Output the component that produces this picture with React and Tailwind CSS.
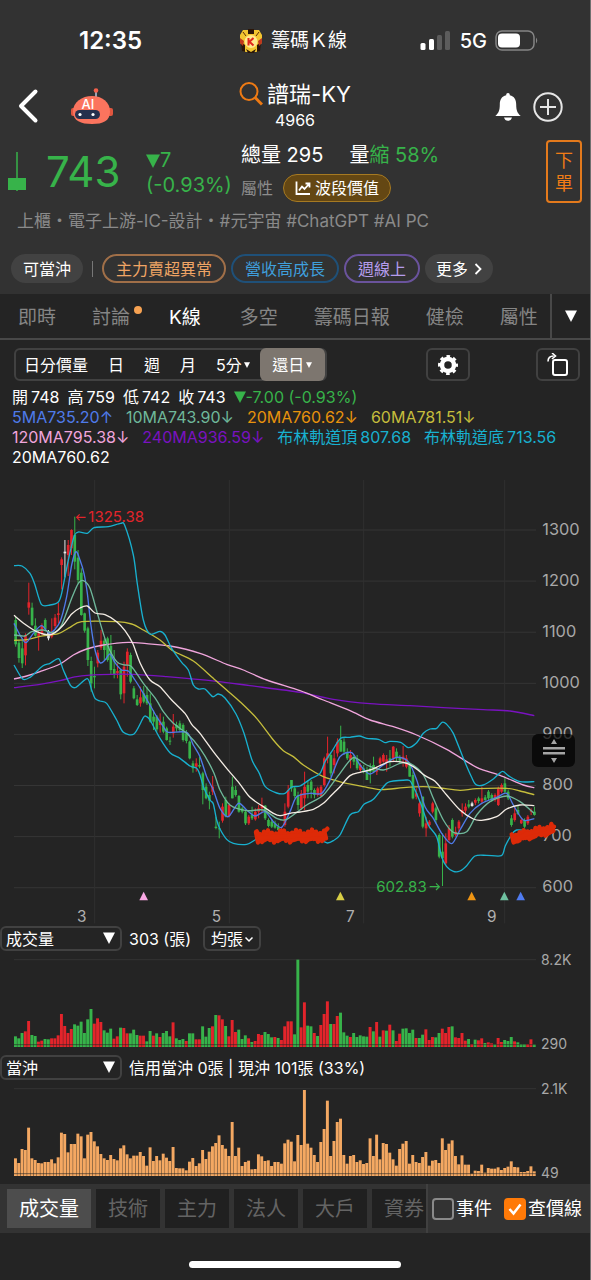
import React, { useState } from 'react';

const GREEN = '#37b34a';
const RED = '#e3242b';
const WHITE = '#e8e8e8';
const COLORS = { g: GREEN, r: RED, w: WHITE };

const STEP = 9.85;
const LEFT = 42;

// bodyTop, bodyBottom, high, low, colour
const candles = `
450,523,440,530,g 518,564,510,578,g 535,580,505,594,g 495,556,490,586,r 397,413,338,434,r 413,465,398,468,g
467,497,445,500,g 490,500,480,542,r 468,490,460,495,r 450,477,445,485,g 485,505,480,511,w 490,500,445,505,r
443,468,432,475,r 430,435,398,460,r 268,285,262,358,r 245,250,210,322,w 225,255,210,318,r 180,235,178,255,r
195,275,140,298,g 263,330,240,340,g 308,435,295,437,g 430,482,428,488,g 475,570,470,588,g 573,640,560,665,g
618,622,590,655,g 548,580,540,592,r 512,533,480,540,r 512,540,505,570,g 505,570,500,575,g 528,600,495,612,g
597,612,540,625,g 603,610,580,625,r 600,673,596,688,g 590,670,575,700,r 545,585,535,620,r 555,635,548,640,g
655,685,648,688,g 688,705,675,708,g 682,700,650,710,r 670,695,648,700,g 675,700,650,705,g 700,755,670,758,g
740,755,720,780,g 740,778,735,785,g 755,765,730,788,r 755,785,740,790,g 775,810,770,812,g 812,815,800,825,g
770,790,732,803,r 765,775,755,785,g 760,780,752,785,g 765,810,760,815,g 790,813,780,820,g 815,865,812,868,g
880,895,872,908,g 880,890,865,905,r 885,890,860,895,g 910,960,905,1003,g 950,985,940,988,g 975,992,965,1018,g
950,965,918,975,r 1070,1074,1040,1078,g 1075,1078,1055,1105,g 1010,1052,1000,1058,r 990,1040,980,1042,g 1005,1038,1000,1042,r
950,985,920,985,g 960,975,948,980,g 978,1025,975,1028,g 1015,1025,1010,1030,g 1025,1060,1020,1065,g 1040,1060,1035,1065,r
1035,1045,1010,1050,g 1025,1048,1015,1052,r 1015,1025,1005,1045,r 1005,1015,983,1030,r 1007,1045,1005,1050,g 1050,1068,1045,1072,g
1055,1070,1048,1074,g 1060,1073,1052,1076,g 1070,1080,1060,1082,g 1078,1090,1070,1095,r 1025,1065,1000,1070,r 960,1010,945,1015,r
930,955,930,965,g 955,978,950,985,g 975,1005,965,1020,g 970,1015,960,1020,r 950,985,905,1020,r 945,965,930,985,g
935,960,930,985,g 960,975,955,985,g 955,975,950,980,r 950,978,945,980,r 865,945,860,950,r 850,865,800,880,r
855,910,850,920,g 865,885,840,910,r 815,850,805,860,r 810,845,767,845,g 815,845,805,855,g 848,865,835,870,g
855,870,840,895,r 860,875,855,885,g 870,895,855,900,g 885,900,880,905,r 895,905,885,910,g 900,930,890,930,g
895,905,880,940,g 885,905,860,908,g 895,905,890,915,r 865,880,860,885,r 855,875,850,878,r 868,878,855,905,r
865,875,840,890,g 830,865,828,875,r 845,865,835,875,g 862,872,855,880,g 860,868,828,890,r 865,890,855,895,r
885,920,880,920,g 915,985,905,988,g 970,980,955,988,r 1000,1030,990,1040,r 980,1070,980,1075,g
1060,1075,1040,1100,r 1055,1065,1050,1075,r 1000,1025,995,1030,r 1015,1050,1010,1060,g 1095,1160,1090,1165,g 1145,1165,1090,1248,g
1120,1180,1090,1185,r 1075,1110,1065,1115,r 1050,1100,1045,1105,g 1085,1095,1070,1100,r 1055,1075,1050,1090,r 1020,1030,1000,1040,r
1010,1022,1000,1030,r 1003,1010,990,1015,g 1000,1008,995,1010,w 990,998,985,1005,r 985,993,980,1000,g 985,995,950,1000,r
982,990,975,995,g 965,985,960,990,g 975,990,970,995,g 975,988,970,995,r 955,1005,950,1008,r 945,965,940,970,r
940,965,920,970,g 965,985,960,990,g 1045,1065,1035,1070,g 1030,1050,1010,1055,r 1020,1032,1005,1035,g 1050,1060,1045,1062,r
1050,1070,1045,1075,g 1040,1060,1035,1065,r 1022,1025,1015,1035,r 1025,1035,1010,1037,g
`.trim().split(/\s+/).map((row) => {
  const [top, bottom, high, low, color] = row.split(',');
  return { top: +top, bottom: +bottom, high: +high, low: +low, color };
});

const lines = [
  { color: '#7a12c0', pts: '42,653 120,643 180,632 230,620 300,614 400,613 500,620 650,634 750,647 900,667 1000,688 1110,701 1230,707 1330,713 1450,719 1530,723 1603,737' },
  { color: '#f0a5dc', pts: '42,627 80,618 120,605 180,582 220,555 260,537 310,525 385,517 440,521 510,528 600,550 680,583 730,600 800,630 900,662 970,690 1050,722 1110,750 1180,770 1250,795 1340,838 1430,892 1500,916 1570,945 1603,953' },
  { color: '#c5bd3c', pts: '42,511 80,509 120,499 175,491 210,472 245,455 350,455 395,462 430,480 480,510 520,543 580,573 640,625 680,660 720,695 770,745 820,810 850,842 880,860 910,885 970,920 1030,938 1090,950 1145,959 1210,953 1270,950 1320,954 1380,961 1430,956 1520,955 1560,963 1603,974' },
  { color: '#18b0cf', pts: '42,287 66,288 90,310 104,342 124,403 150,405 175,396 185,370 205,270 222,200 235,186 262,190 282,173 325,170 362,160 374,166 400,255 412,342 430,450 450,492 480,484 495,495 515,535 545,577 565,600 580,645 595,657 615,657 638,680 655,672 675,684 708,732 732,790 756,870 778,910 796,950 830,969 855,970 875,951 900,948 930,928 960,910 975,875 995,845 1022,805 1050,802 1078,798 1100,805 1135,808 1155,818 1170,814 1202,817 1225,833 1250,818 1270,790 1290,777 1310,775 1326,757 1340,763 1360,790 1390,865 1415,922 1428,944 1450,945 1480,927 1507,904 1525,917 1560,935 1603,935' },
  { color: '#18b0cf', pts: '42,585 68,627 90,622 128,588 150,580 176,566 190,600 212,647 228,652 262,626 275,660 285,685 300,693 320,700 350,750 370,787 402,792 430,743 438,739 450,750 480,805 510,848 540,865 570,888 590,895 600,915 612,955 630,990 640,1002 650,1050 660,1077 680,1108 700,1120 740,1123 765,1110 790,1090 850,1096 900,1100 960,1110 982,1119 1000,1112 1020,1095 1050,1035 1075,1025 1092,1003 1120,988 1155,945 1170,935 1222,930 1235,940 1262,1000 1285,1065 1310,1100 1325,1160 1340,1190 1360,1204 1380,1203 1400,1187 1425,1158 1460,1156 1504,1157 1515,1130 1528,1105 1550,1080 1603,1085' },
  { color: '#4f7bea', pts: '42,460 60,495 78,518 100,490 125,467 150,490 180,455 200,380 215,285 228,245 240,270 252,310 262,370 272,460 285,540 300,578 315,570 330,552 345,578 365,600 385,603 405,630 425,662 450,705 470,740 490,770 505,787 560,787 580,825 600,860 620,920 640,960 660,1015 685,1040 715,1000 740,1020 765,1038 795,1025 820,1055 845,1072 870,1025 890,980 930,970 965,970 990,930 1020,860 1055,848 1080,885 1110,912 1150,885 1190,862 1225,875 1250,930 1275,1010 1300,1045 1325,1090 1355,1121 1380,1080 1410,1030 1445,1000 1490,982 1520,970 1540,1005 1570,1050 1603,1046' },
  { color: '#6fb89b', pts: '42,495 75,498 95,485 130,480 160,488 185,465 215,385 235,340 250,332 270,355 295,440 320,520 350,575 375,585 395,590 430,640 468,688 490,725 520,760 560,790 600,835 640,905 660,960 690,1005 740,1022 790,1020 830,1045 860,1048 920,1005 970,975 1020,910 1060,863 1100,885 1150,900 1200,880 1230,880 1270,915 1300,985 1330,1050 1360,1087 1400,1085 1430,1035 1470,995 1520,978 1560,995 1603,1030' },
  { color: '#f3ece4', pts: '42,436 75,463 110,485 145,495 165,488 190,465 215,432 240,414 262,408 285,429 315,434 350,455 375,482 398,520 420,578 450,630 480,650 515,690 555,730 575,763 600,790 640,845 680,895 718,940 750,982 790,1010 820,1030 840,1037 870,1030 900,1026 940,1018 970,1000 995,975 1020,950 1050,917 1080,907 1110,900 1140,887 1170,875 1210,877 1240,890 1275,917 1305,934 1340,975 1380,1020 1420,1047 1445,1051 1490,1040 1520,1017 1560,1005 1603,1007' },
];

const volumeHeights = [
  32, 26, 42, 47, 78, 36, 33, 16, 19, 24, 23, 26, 26, 35, 99, 63, 42, 54, 68, 64, 76, 42, 83, 114, 70, 86, 75, 50, 43, 55,
  25, 32, 58, 57, 41, 41, 52, 36, 34, 34, 17, 48, 34, 41, 30, 42, 48, 32, 74, 26, 21, 24, 18, 41, 41, 23, 23, 62, 31, 57,
  62, 96, 95, 83, 63, 32, 81, 45, 52, 24, 35, 26, 15, 18, 39, 36, 45, 39, 29, 30, 27, 21, 62, 77, 77, 38, 262, 59, 134, 64,
  62, 42, 33, 66, 99, 137, 69, 69, 93, 103, 44, 34, 30, 42, 30, 35, 32, 31, 60, 47, 75, 31, 50, 49, 67, 50, 18, 40, 55, 56,
  42, 52, 27, 27, 37, 53, 21, 30, 29, 42, 55, 42, 60, 62, 29, 27, 42, 19, 24, 9, 22, 20, 26, 12, 14, 11, 8, 27, 15, 21,
  18, 30, 17, 14, 9, 9, 9, 23, 8,
];
const volumeColors =
  'gggrrggrrg' + 'grrrrrrrgg' + 'ggggrrrggg' + 'rrgrrgggrr' + 'ggrgrgggrg' +
  'ggrggrrggg' + 'rgrrgrrrgg' + 'grgrrrgggr' + 'grrrrggrrg' + 'grgrrrgrrg' +
  'ggrgggggrg' + 'rgrgrgrrgg' + 'ggrggrrrgg' + 'rrrgrrrrgr' + 'grrgrrgrrg' + 'ggrgggrrg';

const dayTradeHeights = [
  53, 39, 81, 78, 145, 53, 48, 39, 38, 42, 42, 50, 38, 56, 130, 126, 71, 96, 96, 127, 119, 53, 124, 132, 104, 89, 66, 53, 48, 63,
  51, 47, 83, 92, 65, 53, 61, 61, 72, 60, 31, 86, 45, 60, 47, 67, 55, 45, 87, 24, 23, 23, 17, 43, 54, 30, 38, 78, 51, 73,
  89, 99, 122, 93, 82, 60, 162, 60, 85, 30, 42, 46, 20, 21, 65, 59, 45, 47, 30, 42, 42, 37, 98, 109, 103, 44, 123, 93, 258, 97,
  85, 63, 42, 102, 141, 226, 60, 105, 162, 172, 63, 37, 60, 63, 42, 47, 36, 39, 113, 60, 124, 50, 99, 96, 70, 50, 31, 81, 97, 105,
  37, 63, 42, 39, 57, 72, 31, 46, 48, 39, 113, 78, 97, 107, 60, 35, 62, 34, 34, 7, 16, 15, 34, 10, 24, 22, 22, 26, 18, 24,
  28, 44, 27, 26, 12, 12, 15, 29, 14,
];

const smoothPath = (str) => {
  const p = str.split(' ').map((s) => s.split(',').map(Number));
  let d = `M${p[0][0]} ${p[0][1]}`;
  for (let i = 0; i < p.length - 1; i++) {
    const a = p[i - 1] || p[i];
    const b = p[i];
    const c = p[i + 1];
    const e = p[i + 2] || c;
    d += `C${b[0] + (c[0] - a[0]) / 7} ${b[1] + (c[1] - a[1]) / 7} ${c[0] - (e[0] - b[0]) / 7} ${c[1] - (e[1] - b[1]) / 7} ${c[0]} ${c[1]}`;
  }
  return d;
};

// red marker strokes over the two support zones
const scribble = (x0, y0, x1, y1, h) => {
  const n = Math.round((x1 - x0) / 6);
  let d = '';
  for (let i = 0; i <= n; i++) {
    const x = x0 + ((x1 - x0) * i) / n;
    const mid = y0 + ((y1 - y0) * i) / n;
    const amp = h * (0.7 + 0.3 * Math.sin(i * 2.3));
    d += `${i ? 'L' : 'M'}${x.toFixed(1)} ${(mid + (i % 2 ? amp : -amp)).toFixed(1)}`;
  }
  return d;
};

const Triangle = ({ className }) => (
  <svg className={className} viewBox="0 0 12 12" aria-hidden="true"><path d="M0 0.500H12L6 12Z" fill="currentColor" /></svg>
);

const StatusBar = () => (
  <div className="flex h-20 items-center pl-[79px] pr-[51px] pt-0.5">
    <span className="w-[160px] text-2xl font-semibold">12:35</span>
    <div className="flex flex-1 items-center gap-2">
      <svg className="h-6 w-6" viewBox="0 0 24 24">
        <path d="M4 1h5v4h6V1h5l3 5v8l-3 2v6l-3 1H7l-3-1v-6l-3-2V6z" fill="#f2c530" />
        <path d="M9 0h6v5H9zM2 13l4 3v7l-3-1zM22 13l-4 3v7l3-1zM7 20l5 3 5-3-2 4H9z" fill="#2b1608" />
        <path d="M1 9l4 3-1 5-3-3zM23 9l-4 3 1 5 3-3z" fill="#c0391d" />
        <path d="M4 3l3 4M20 3l-3 4" stroke="#5d2c0b" strokeWidth="1" />
        <circle cx="12" cy="12.500" r="6.500" fill="#ffe98c" />
        <path d="M9.500 9v7.500M14.500 9l-4 3.800 4 3.700" stroke="#e0261c" strokeWidth="2" fill="none" />
      </svg>
      <span className="text-[19px]">籌碼Ｋ線</span>
    </div>
    <div className="flex items-center gap-2">
      <svg className="h-6 w-8" viewBox="0 0 32 24">
        <rect x="0.500" y="14" width="5" height="7" rx="1.500" fill="#fff" />
        <rect x="9" y="10" width="5" height="11" rx="1.500" fill="#fff" />
        <rect x="17" y="6" width="5" height="15" rx="1.500" fill="#5c5c5c" />
        <rect x="25" y="2" width="5" height="19" rx="1.500" fill="#5c5c5c" />
      </svg>
      <span className="text-xl font-medium">5G</span>
      <svg className="h-6 w-11" viewBox="0 0 44 24">
        <rect x="1" y="2" width="38" height="19" rx="6" fill="none" stroke="#858585" strokeWidth="1.500" />
        <rect x="3" y="4.500" width="22" height="14" rx="4" fill="#fff" />
        <path d="M41 8.500q2.500 3 0 6z" fill="#858585" />
      </svg>
    </div>
  </div>
);

const NavBar = () => (
  <div className="grid h-[50px] grid-cols-[1fr_auto_1fr] items-center pl-[17px] pr-[17px]">
    <div className="flex items-center gap-8 pb-1">
      <button type="button" aria-label="返回">
        <svg className="h-9 w-[22px]" viewBox="0 0 22 36"><path d="M18.500 3.500L4 18l14.500 14.500" fill="none" stroke="#fff" strokeWidth="4" strokeLinecap="round" strokeLinejoin="round" /></svg>
      </button>
      <button type="button" aria-label="AI 助理">
        <svg className="h-9 w-[42px]" viewBox="0 0 42 36">
          <path d="M25 3v7" stroke="#9aa3b5" strokeWidth="2" />
          <circle cx="25" cy="2.500" r="2.300" fill="#f4604b" />
          <rect x="0" y="20" width="42" height="8" rx="2" fill="#e0563f" />
          <path d="M21 8c10 0 18 6 18 15.500S32 36 21 36 2 33 2 23.500 11 8 21 8z" fill="#fb745e" />
          <rect x="4" y="22" width="25" height="9" rx="4.500" fill="#26304d" />
          <circle cx="9" cy="26.500" r="1.600" fill="#fff" />
          <circle cx="22" cy="26.500" r="1.600" fill="#fff" />
          <text x="17" y="21" textAnchor="middle" fontSize="13" fontWeight="500" fill="#fff">AI</text>
        </svg>
      </button>
    </div>
    <div className="flex flex-col items-center pb-1">
      <button type="button" className="flex items-center gap-1">
        <svg className="h-6 w-6" viewBox="0 0 24 24"><circle cx="10" cy="9.500" r="8.500" fill="none" stroke="#ee7a14" strokeWidth="2" /><path d="M16 15.500l7 7" stroke="#ee7a14" strokeWidth="3" /></svg>
        <h1 className="text-[22px] leading-7">譜瑞-KY</h1>
      </button>
      <span className="text-base leading-6">4966</span>
    </div>
    <div className="flex items-center justify-end gap-3 pb-0.5 pr-2.5">
      <button type="button" aria-label="通知">
        <svg className="h-7 w-[26px]" viewBox="0 0 26 28"><path d="M13 0c1.200 0 1.800.8 1.800 2.200 4.500 1 6.400 4.400 6.400 9.300 0 6 1.300 8.500 4.500 11.500H.3c3.200-3 4.500-5.500 4.500-11.500 0-4.900 1.900-8.300 6.400-9.300C11.200.8 11.800 0 13 0zM9 24.500h8c-.5 2-2 3.300-4 3.300s-3.500-1.300-4-3.300z" fill="#fff" /></svg>
      </button>
      <button type="button" aria-label="加入自選">
        <svg className="h-[30px] w-[30px]" viewBox="0 0 30 30"><circle cx="15" cy="15" r="13.700" fill="none" stroke="#e6e6e6" strokeWidth="2" /><path d="M15 7v16M7 15h16" stroke="#e6e6e6" strokeWidth="2" /></svg>
      </button>
    </div>
  </div>
);

const Quote = () => (
  <section className="flex items-start px-2 pt-2.5">
    <svg className="mt-3 h-10 w-[18px] shrink-0" viewBox="0 0 18 40"><path d="M9 0v39" stroke={GREEN} strokeWidth="1.500" /><rect x="0" y="26" width="18" height="12" fill={GREEN} /></svg>
    <strong className="ml-5 mt-2 w-[100px] text-[42px] font-normal leading-[48px] text-[#37b34a]">743</strong>
    <div className="mt-2 w-[95px] text-xl leading-[25px] text-[#37b34a]">
      <div className="flex items-center"><Triangle className="h-3.5 w-3.5" />7</div>
      <div>(-0.93%)</div>
    </div>
    <div className="flex-1">
      <div className="flex gap-[26px] text-xl leading-[30px]">
        <span>總量 295</span>
        <span>量<span className="text-[#37b34a]">縮 58%</span></span>
      </div>
      <div className="mt-1 flex items-center gap-2.5">
        <span className="text-base text-[#8c8c8c]">屬性</span>
        <button type="button" className="flex h-7 items-center gap-1 rounded-full border border-[#a67a22] bg-[#644713] px-[11px] text-base">
          <svg className="h-4 w-4" viewBox="0 0 16 16" fill="none" stroke="#fff" strokeWidth="1.800"><path d="M1.500 1.500v12.500H15M4 10.500l3-4 2.500 2.500L14 4M10.500 3.500h4v4" /></svg>
          波段價值
        </button>
      </div>
    </div>
    <button type="button" className="h-[63px] w-9 rounded border-2 border-[#e47a1c] text-lg leading-[23px] text-[#f07c16]">下<br />單</button>
  </section>
);

const chips = [
  { label: '主力賣超異常', style: 'border-[#a06f48] text-[#f0a565]' },
  { label: '營收高成長', style: 'border-[#1f5078] text-[#3f9fdc]' },
  { label: '週線上', style: 'border-[#6a539c] text-[#b59cec]' },
];

const Chips = () => (
  <div className="mt-[21px] flex items-center gap-[5px] whitespace-nowrap pb-[11px] pl-[11px] text-base">
    <button type="button" className="h-[29px] rounded-full bg-[#424242] px-3">可當沖</button>
    <span className="mx-1 h-4 w-px bg-[#777]" />
    {chips.map((chip) => (
      <button type="button" key={chip.label} className={`h-[29px] rounded-full border-2 px-2.5 leading-6 ${chip.style}`}><span className="px-0.5">{chip.label}</span></button>
    ))}
    <button type="button" className="flex h-[29px] items-center gap-1.5 rounded-full bg-[#424242] px-[11px]">
      更多
      <svg className="h-3 w-2" viewBox="0 0 8 12"><path d="M1.500 1l5 5-5 5" fill="none" stroke="#fff" strokeWidth="1.800" /></svg>
    </button>
  </div>
);

const tabs = ['即時', '討論', 'K線', '多空', '籌碼日報', '健檢', '屬性'];

const Tabs = () => {
  const [active, setActive] = useState('K線');
  return (
    <nav className="flex h-[46px] border-b-2 border-b-[#484848]">
      <div className="flex min-w-0 flex-1 items-center gap-9 overflow-hidden whitespace-nowrap pl-[18px] pt-1 text-[19px]">
        {tabs.map((tab) => (
          <button type="button" key={tab} onClick={() => setActive(tab)} className={`relative shrink-0 ${tab === active ? 'px-[3px] text-white' : 'text-[#858585]'}`}>
            {tab}
            {tab === '討論' && <span className="absolute -right-3 top-0.5 h-2 w-2 rounded-full bg-[#f6a252]" />}
          </button>
        ))}
      </div>
      <button type="button" aria-label="更多頁籤" className="flex w-10 items-center justify-center border-l-2 border-[#484848]">
        <Triangle className="h-3 w-3" />
      </button>
    </nav>
  );
};

const Toolbar = () => (
  <div className="flex items-center pl-3.5 pr-2.5 pt-2 text-base">
    <div className="flex h-[33px] items-center whitespace-nowrap rounded-md border-2 border-[#414141]">
      <button type="button" className="pl-2">日分價量</button>
      <button type="button" className="pl-5">日</button>
      <button type="button" className="pl-5">週</button>
      <button type="button" className="pl-5">月</button>
      <button type="button" className="flex items-center gap-0.5 pl-5 pr-2.5">5分<Triangle className="h-1.5 w-1.5" /></button>
      <button type="button" className="flex h-[33px] w-[65px] items-center justify-center gap-0.5 rounded-md bg-[#7d766f]">還日<Triangle className="h-1.5 w-1.5" /></button>
    </div>
    <div className="flex flex-1 justify-between pl-[99px]">
      <button type="button" aria-label="設定" className="flex h-[33px] w-11 items-center justify-center rounded-md border-2 border-[#414141]">
        <svg className="h-5 w-5" viewBox="0 0 20 20">
          <circle cx="10" cy="10" r="6" fill="none" stroke="#fff" strokeWidth="4.500" />
          <circle cx="10" cy="10" r="8.700" fill="none" stroke="#fff" strokeWidth="2.600" strokeDasharray="3.600 3.233" strokeDashoffset="1.800" />
        </svg>
      </button>
      <button type="button" aria-label="旋轉螢幕" className="flex h-[33px] w-11 items-center justify-center rounded-md border-2 border-[#414141]">
        <svg className="h-6 w-6" viewBox="0 0 24 24" fill="none" stroke="#fff" strokeWidth="2"><rect x="7" y="7" width="14" height="15" rx="2" /><path d="M2 8.500C2 5 4 3 7.500 3M6 0l3.500 3L6 6" strokeWidth="1.600" /></svg>
      </button>
    </div>
  </div>
);

const Reading = ({ label, value, className }) => (
  <span className={`flex gap-[3px] ${className || ''}`}><span>{label}</span><span>{value}</span></span>
);

const Indicators = () => (
  <div className="whitespace-nowrap pb-[3px] pl-3 pt-1.5 text-base leading-5">
    <div className="flex gap-2">
      <Reading label="開" value="748" />
      <Reading label="高" value="759" />
      <Reading label="低" value="742" />
      <Reading label="收" value="743" />
      <span className="flex items-center text-[#37b34a]"><Triangle className="h-3 w-3" />-7.00 (-0.93%)</span>
    </div>
    <div className="flex gap-[13px]">
      <span className="text-[#4f7bea]">5MA735.20↑</span>
      <span className="text-[#6fb89b]">10MA743.90↓</span>
      <span className="text-[#e8930c]">20MA760.62↓</span>
      <span className="text-[#c5bd3c]">60MA781.51↓</span>
    </div>
    <div className="flex gap-[13px]">
      <span className="text-[#f0a5dc]">120MA795.38↓</span>
      <span className="text-[#7a12c0]">240MA936.59↓</span>
      <Reading label="布林軌道頂" value="807.68" className="text-[#18b0cf]" />
      <Reading label="布林軌道底" value="713.56" className="text-[#18b0cf]" />
    </div>
    <div>20MA760.62</div>
  </div>
);

const prices = [1300, 1200, 1100, 1000, 900, 800, 700, 600];
const months = [{ x: 284, label: '3' }, { x: 688, label: '5' }, { x: 1091, label: '7' }, { x: 1514, label: '9' }];
const markers = [[431, '#f9a8e4'], [1021, '#d8ce45'], [1415, '#ee9413'], [1513, '#6fc0a0'], [1562, '#4f7bf0']];

const PriceChart = () => (
  <div className="relative">
    <svg className="block h-auto w-full" viewBox="0 0 1770 1368" role="img" aria-label="K線圖">
      {prices.map((price, i) => (
        <g key={price}>
          <path d={`M42 ${180 + i * 153.3}H1608`} stroke="#353535" strokeWidth="3" />
          <text x="1627" y={194 + i * 153.3} fontSize="49" fill="#a8a8a8">{price}</text>
        </g>
      ))}
      {months.map((m) => (
        <g key={m.label}>
          <path d={`M${m.x} 30V1360`} stroke="#303030" strokeWidth="3" />
          <text x={m.x - 53} y="1357" fontSize="46" fill="#b0b0b0">{m.label}</text>
        </g>
      ))}
      {candles.map((c, i) => {
        const x = LEFT + STEP * i + 5;
        return (
          <g key={i} fill={COLORS[c.color]}>
            <rect x={x - 1.5} y={c.high} width="3" height={c.low - c.high} />
            <rect x={x - 4} y={c.top} width="8" height={Math.max(c.bottom - c.top, 3)} />
          </g>
        );
      })}
      {lines.map((line, i) => (
        <path key={i} d={smoothPath(line.pts)} fill="none" stroke={line.color} strokeWidth="4" strokeLinejoin="round" />
      ))}
      <path d="M257 142H230M239 133l-9 9 9 9" fill="none" stroke={RED} strokeWidth="3.5" />
      <text x="265" y="157" fontSize="45" fill={RED}>1325.38</text>
      <text x="1280" y="1265" fontSize="45" textAnchor="end" fill={GREEN}>602.83</text>
      <path d="M1289 1250H1318M1308 1240l10 10-10 10" fill="none" stroke={GREEN} strokeWidth="3.5" />
      {markers.map(([x, color]) => (
        <path key={x} d={`M${x - 13} 1291L${x} 1265L${x + 13} 1291Z`} fill={color} />
      ))}
      <g fill="none" stroke="#dd2a08" strokeWidth="13" strokeLinejoin="round" strokeLinecap="round">
        <path d={scribble(768, 1100, 978, 1097, 19)} />
        <path d={scribble(775, 1102, 970, 1101, 10)} />
        <path d="M770 1084L780 1104L966 1092L982 1076" />
        <path d={scribble(1535, 1104, 1660, 1076, 16)} />
        <path d={scribble(1540, 1108, 1655, 1080, 9)} />
        <path d="M1540 1112L1580 1092L1662 1070" />
      </g>
    </svg>
    <button type="button" aria-label="調整圖高" className="absolute right-[15px] top-[264px] flex h-[33px] w-[43px] items-center justify-center rounded-md bg-black/70">
      <svg className="h-6 w-6" viewBox="0 0 24 24" fill="#a5a5a5"><path d="M9 5l3-5 3 5zM9 19l3 5 3-5zM1 8h22v2.500H1zM1 13h22v2.500H1z" /></svg>
    </button>
  </div>
);

const BarChart = ({ label, heights, colorAt, max, min }) => (
  <svg className="block h-auto w-full" viewBox="0 -6 1770 306" role="img" aria-label={label}>
    <path d="M42 20H1608" stroke="#333" strokeWidth="3" />
    {heights.map((h, i) => (
      <rect key={i} x={LEFT + STEP * i} y={282 - h} width="8.8" height={h} fill={colorAt(i)} />
    ))}
    <path d="M42 275H1608" stroke="#242424" strokeOpacity="0.6" strokeWidth="3" />
    <text x="1623" y="36" fontSize="42" fill="#a8a8a8">{max}</text>
    <text x="1623" y="289" fontSize="42" fill="#a8a8a8">{min}</text>
  </svg>
);

const IndicatorSelect = ({ label, options }) => (
  <div className="relative w-[122px]">
    <select aria-label={label} className="block h-[25px] w-full appearance-none rounded-md border-2 border-[#414141] bg-transparent pl-1 text-base leading-5">
      {options.map((o) => <option key={o}>{o}</option>)}
    </select>
    <Triangle className="pointer-events-none absolute right-[7px] top-1.5 h-3 w-3" />
  </div>
);

const bottomTabs = ['成交量', '技術', '主力', '法人', '大戶', '資券'];

const BottomBar = () => {
  const [active, setActive] = useState('成交量');
  const [events, setEvents] = useState(false);
  const [priceLine, setPriceLine] = useState(true);
  return (
    <div className="mt-0.5 flex h-[49px] bg-[#333]">
      <div className="flex min-w-0 flex-1 items-center gap-[5px] overflow-hidden whitespace-nowrap border-r-2 border-[#404040] pl-[7px] text-xl">
        {bottomTabs.map((tab) => (
          <button type="button" key={tab} onClick={() => setActive(tab)} className={`h-[39px] shrink-0 px-3 ${tab === active ? 'bg-[#4d4d4d] text-white' : 'bg-[#202020] text-[#646464]'}`}>{tab}</button>
        ))}
      </div>
      <div className="flex shrink-0 items-center gap-3 pl-1 pr-2 text-lg">
        <label className="flex items-center gap-0.5">
          <input type="checkbox" checked={events} onChange={(e) => setEvents(e.target.checked)} className="h-[22px] w-[22px] appearance-none rounded-sm border-2 border-[#8a8a8a] checked:bg-[#ff7a08]" />
          事件
        </label>
        <label className="relative flex items-center gap-0.5">
          <input type="checkbox" checked={priceLine} onChange={(e) => setPriceLine(e.target.checked)} className="h-[22px] w-[22px] appearance-none rounded-sm border-2 border-[#8a8a8a] checked:border-[#ff7a08] checked:bg-[#ff7a08]" />
          {priceLine && <svg className="pointer-events-none absolute left-1 h-3.5 w-3.5" viewBox="0 0 14 14"><path d="M1.500 7l4 4.500 7-9" fill="none" stroke="#fff" strokeWidth="2.500" /></svg>}
          查價線
        </label>
      </div>
    </div>
  );
};

const App = () => {
  return (
    <div className="min-h-screen overflow-x-hidden border-r border-[#707070] bg-[#242424] font-['Inter','Noto_Sans_CJK_TC',sans-serif] text-white">
      <header className="bg-[#323232]">
        <StatusBar />
        <NavBar />
        <Quote />
        <p className="mt-1.5 whitespace-pre pl-[17px] text-[17px] leading-6 text-[#8a8a8a]">上櫃・電子上游-IC-設計・#元宇宙 #ChatGPT #AI PC</p>
        <Chips />
      </header>
      <Tabs />
      <Toolbar />
      <Indicators />
      <PriceChart />
      <div className="flex items-center text-base leading-5">
        <IndicatorSelect label="副圖一指標" options={['成交量', '技術', '主力']} />
        <span className="pl-[7px]">303 (張)</span>
        <button type="button" className="ml-3 flex h-[25px] items-center gap-0.5 rounded-md border-2 border-[#414141] px-1.5">
          均張
          <svg className="h-2 w-2" viewBox="0 0 8 8"><path d="M0.500 2.500L4 6l3.500-3.500" fill="none" stroke="#fff" strokeWidth="1.500" /></svg>
        </button>
      </div>
      <BarChart label="成交量" heights={volumeHeights} colorAt={(i) => COLORS[volumeColors[i]]} max="8.2K" min="290" />
      <div className="mt-0.5 flex items-center text-base leading-5">
        <IndicatorSelect label="副圖二指標" options={['當沖', '成交量', '法人']} />
        <span className="pl-[7px]">信用當沖 0張 | 現沖 101張 (33%)</span>
      </div>
      <BarChart label="當沖" heights={dayTradeHeights} colorAt={() => '#f4a862'} max="2.1K" min="49" />
      <BottomBar />
      <div className="mx-auto mt-7 h-[7px] w-[212px] rounded-full bg-white" />
    </div>
  );
};

export default App;
